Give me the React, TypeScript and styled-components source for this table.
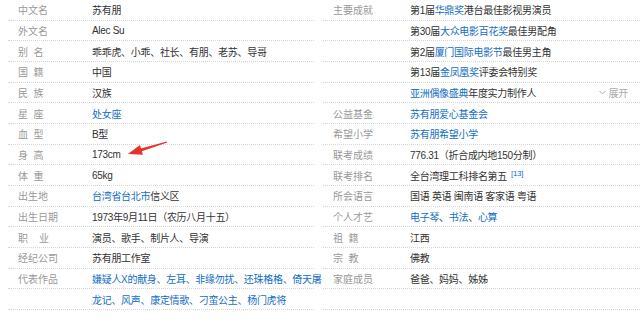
import React from "react";
import styled, { createGlobalStyle } from "styled-components";

const GlobalStyle = createGlobalStyle`
  html, body {
    margin: 0;
    padding: 0;
    background: #fff;
  }
  body {
    font-family: "Liberation Sans", "Noto Sans CJK SC", sans-serif;
    font-size: 10px;
    letter-spacing: -0.3px;
    color: #333;
  }
`;

const Page = styled.div`
  position: relative;
  width: 640px;
  height: 326px;
  overflow: hidden;
  display: flex;
  padding-left: 8px;
  box-sizing: border-box;
`;

const InfoList = styled.div<{ $width: number }>`
  width: ${(p) => p.$width}px;
  flex-shrink: 0;
  margin-right: 9px;
`;

const Row = styled.div`
  display: flex;
  align-items: center;
  height: 20.67px;
  box-sizing: border-box;
  border-bottom: 1px dotted #d6d6d6;
  white-space: nowrap;
`;

const Label = styled.div<{ $width: number }>`
  width: ${(p) => p.$width}px;
  padding-left: 10px;
  box-sizing: border-box;
  color: #999;
  flex-shrink: 0;
  letter-spacing: 0;
`;

const Value = styled.div`
  color: #333;
  flex: 1;
  display: flex;
  align-items: center;
`;

const Link = styled.span`
  color: #136ec2;
`;

const Sup = styled.sup`
  color: #136ec2;
  font-size: 8px;
  margin-left: 4px;
  position: relative;
  top: -2px;
`;

const More = styled.span`
  margin-left: auto;
  margin-right: 12px;
  color: #aaa;
  display: flex;
  align-items: center;
  gap: 3px;
`;

const Arrow = styled.svg`
  position: absolute;
  left: 120px;
  top: 135px;
`;

type Item = { label: string; value: React.ReactNode };

const left: Item[] = [
  { label: "中文名", value: "苏有朋" },
  { label: "外文名", value: "Alec Su" },
  { label: "别\u00a0\u00a0名", value: "乖乖虎、小乖、社长、有朋、老苏、导哥" },
  { label: "国\u00a0\u00a0籍", value: "中国" },
  { label: "民\u00a0\u00a0族", value: "汉族" },
  { label: "星\u00a0\u00a0座", value: <Link>处女座</Link> },
  { label: "血\u00a0\u00a0型", value: "B型" },
  { label: "身\u00a0\u00a0高", value: "173cm" },
  { label: "体\u00a0\u00a0重", value: "65kg" },
  {
    label: "出生地",
    value: (
      <>
        <Link>台湾省台北市</Link>信义区
      </>
    ),
  },
  { label: "出生日期", value: "1973年9月11日（农历八月十五）" },
  { label: "职\u00a0\u00a0\u00a0\u00a0业", value: "演员、歌手、制片人、导演" },
  { label: "经纪公司", value: "苏有朋工作室" },
  { label: "代表作品", value: <Link>嫌疑人X的献身、左耳、非缘勿扰、还珠格格、倚天屠</Link> },
  { label: "", value: <Link>龙记、风声、康定情歌、刁蛮公主、杨门虎将</Link> },
];

const right: Item[] = [
  {
    label: "主要成就",
    value: (
      <>
        第1届<Link>华鼎奖</Link>港台最佳影视男演员
      </>
    ),
  },
  {
    label: "",
    value: (
      <>
        第30届<Link>大众电影百花奖</Link>最佳男配角
      </>
    ),
  },
  {
    label: "",
    value: (
      <>
        第2届<Link>厦门国际电影节</Link>最佳男主角
      </>
    ),
  },
  {
    label: "",
    value: (
      <>
        第13届<Link>金凤凰奖</Link>评委会特别奖
      </>
    ),
  },
  {
    label: "",
    value: (
      <>
        <Link>亚洲偶像盛典</Link>年度实力制作人
        <More>
          <svg width="7" height="5" viewBox="0 0 7 5">
            <path d="M0.5 1 L3.5 4 L6.5 1" fill="none" stroke="#aaa" strokeWidth="1" />
          </svg>
          展开
        </More>
      </>
    ),
  },
  { label: "公益基金", value: <Link>苏有朋爱心基金会</Link> },
  { label: "希望小学", value: <Link>苏有朋希望小学</Link> },
  { label: "联考成绩", value: "776.31（折合成内地150分制）" },
  {
    label: "联考排名",
    value: (
      <>
        全台湾理工科排名第五<Sup>[13]</Sup>
      </>
    ),
  },
  { label: "所会语言", value: "国语 英语 闽南语 客家语 粤语" },
  {
    label: "个人才艺",
    value: (
      <>
        <Link>电子琴</Link>、<Link>书法</Link>、<Link>心算</Link>
      </>
    ),
  },
  { label: "祖\u00a0\u00a0籍", value: "江西" },
  { label: "宗\u00a0\u00a0教", value: "佛教" },
  { label: "家庭成员", value: "爸爸、妈妈、姊姊" },
  { label: "", value: "" },
];

const InfoColumn = ({ items, width, labelWidth }: { items: Item[]; width: number; labelWidth: number }) => (
  <InfoList $width={width}>
    {items.map((it, i) => (
      <Row key={i}>
        <Label $width={labelWidth}>{it.label}</Label>
        <Value>{it.value}</Value>
      </Row>
    ))}
  </InfoList>
);

export default function App() {
  return (
    <>
      <GlobalStyle />
      <Page>
        <InfoColumn items={left} width={306} labelWidth={84} />
        <InfoColumn items={right} width={317} labelWidth={87} />
        <Arrow width="55" height="28" viewBox="0 0 55 28">
          <polygon
            points="47.3,7.6 21.8,16.3 22.9,19.7 8,19 19.9,10.1 21,13.5 46.8,6.4"
            fill="#e8312b"
          />
        </Arrow>
      </Page>
    </>
  );
}
